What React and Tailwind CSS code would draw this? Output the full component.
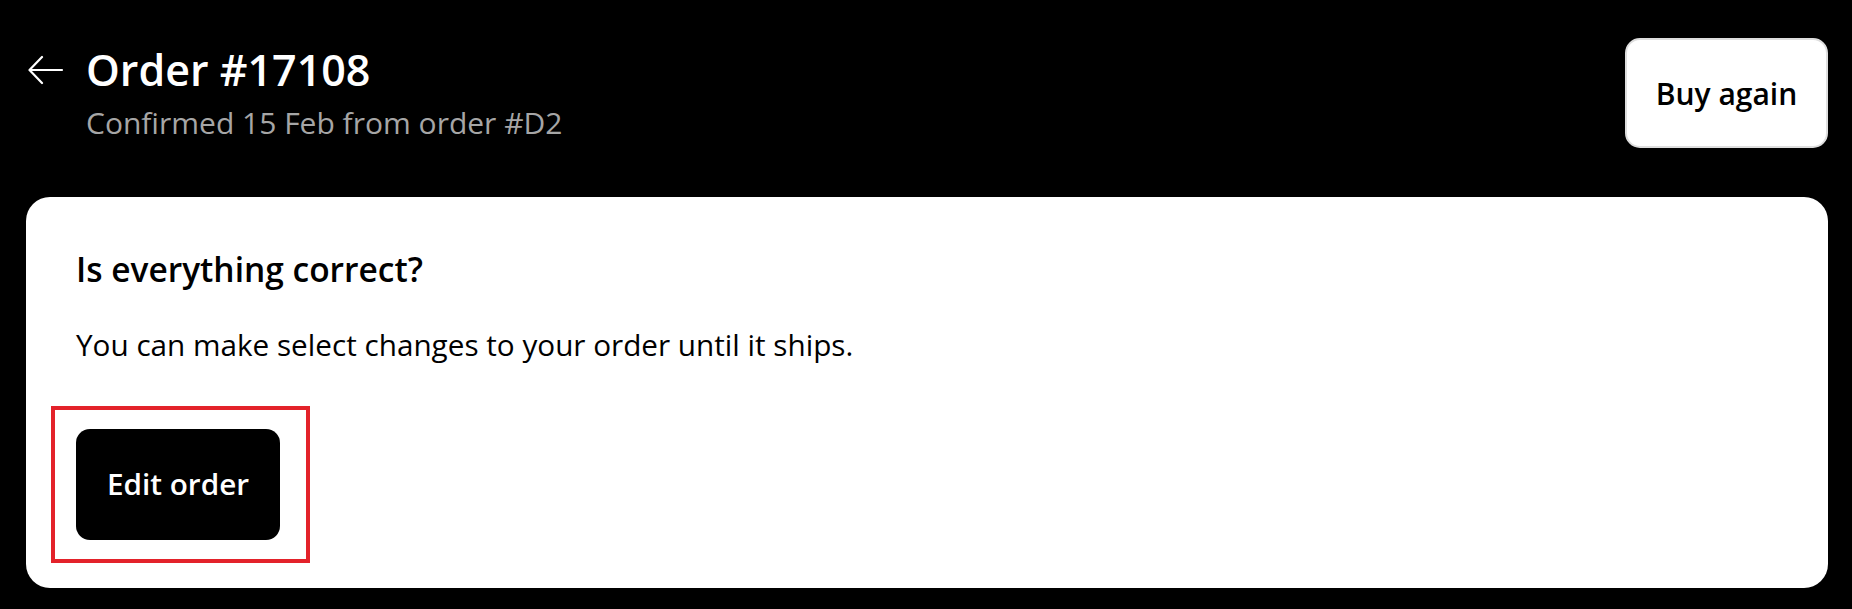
import React from "react";

function BackArrow() {
  return (
    <svg width="36" height="30" viewBox="0 0 36 30" fill="none" stroke="white" strokeWidth="2.2" strokeLinecap="round" strokeLinejoin="round">
      <path d="M34 15H2" />
      <path d="M14 2L1.5 15L14 28" />
    </svg>
  );
}

export default function App() {
  return (
    <div className="min-h-screen w-full bg-black pl-[26px] pr-[24px] pt-[38px] pb-[21px] font-['Open_Sans',sans-serif]">
      <header className="flex items-start justify-between">
        <div className="flex items-start gap-[22px] pl-[2px]">
          <button className="mt-[17px] flex">
            <BackArrow />
          </button>
          <div className="flex flex-col">
            <h1 className="mt-[8px] text-[43px] font-semibold leading-[48px] text-white">Order #17108</h1>
            <p className="mt-[11px] text-[30px] leading-[36px] text-[#a6a6a6]">Confirmed 15 Feb from order #D2</p>
          </div>
        </div>
        <button className="flex h-[110px] w-[203px] items-center justify-center rounded-[15px] border-2 border-[#dedede] bg-white text-[30px] font-semibold text-black">
          Buy again
        </button>
      </header>

      <section className="mt-[49px] rounded-[24px] bg-white pl-[50px] pt-[52px] pb-[48px]">
        <h2 className="text-[33.5px] font-semibold leading-[40px] text-black">Is everything correct?</h2>
        <p className="mt-[38px] text-[29.7px] leading-[36px] text-black">You can make select changes to your order until it ships.</p>
        <div className="relative mt-[66px] w-[204px]">
          <button className="flex h-[111px] w-[204px] items-center justify-center rounded-[14px] bg-black text-[29.7px] font-semibold text-white">
            Edit order
          </button>
          <div className="pointer-events-none absolute -left-[25px] -right-[30px] -top-[23px] -bottom-[23px] border-4 border-[#e3222a]" />
        </div>
      </section>
    </div>
  );
}
